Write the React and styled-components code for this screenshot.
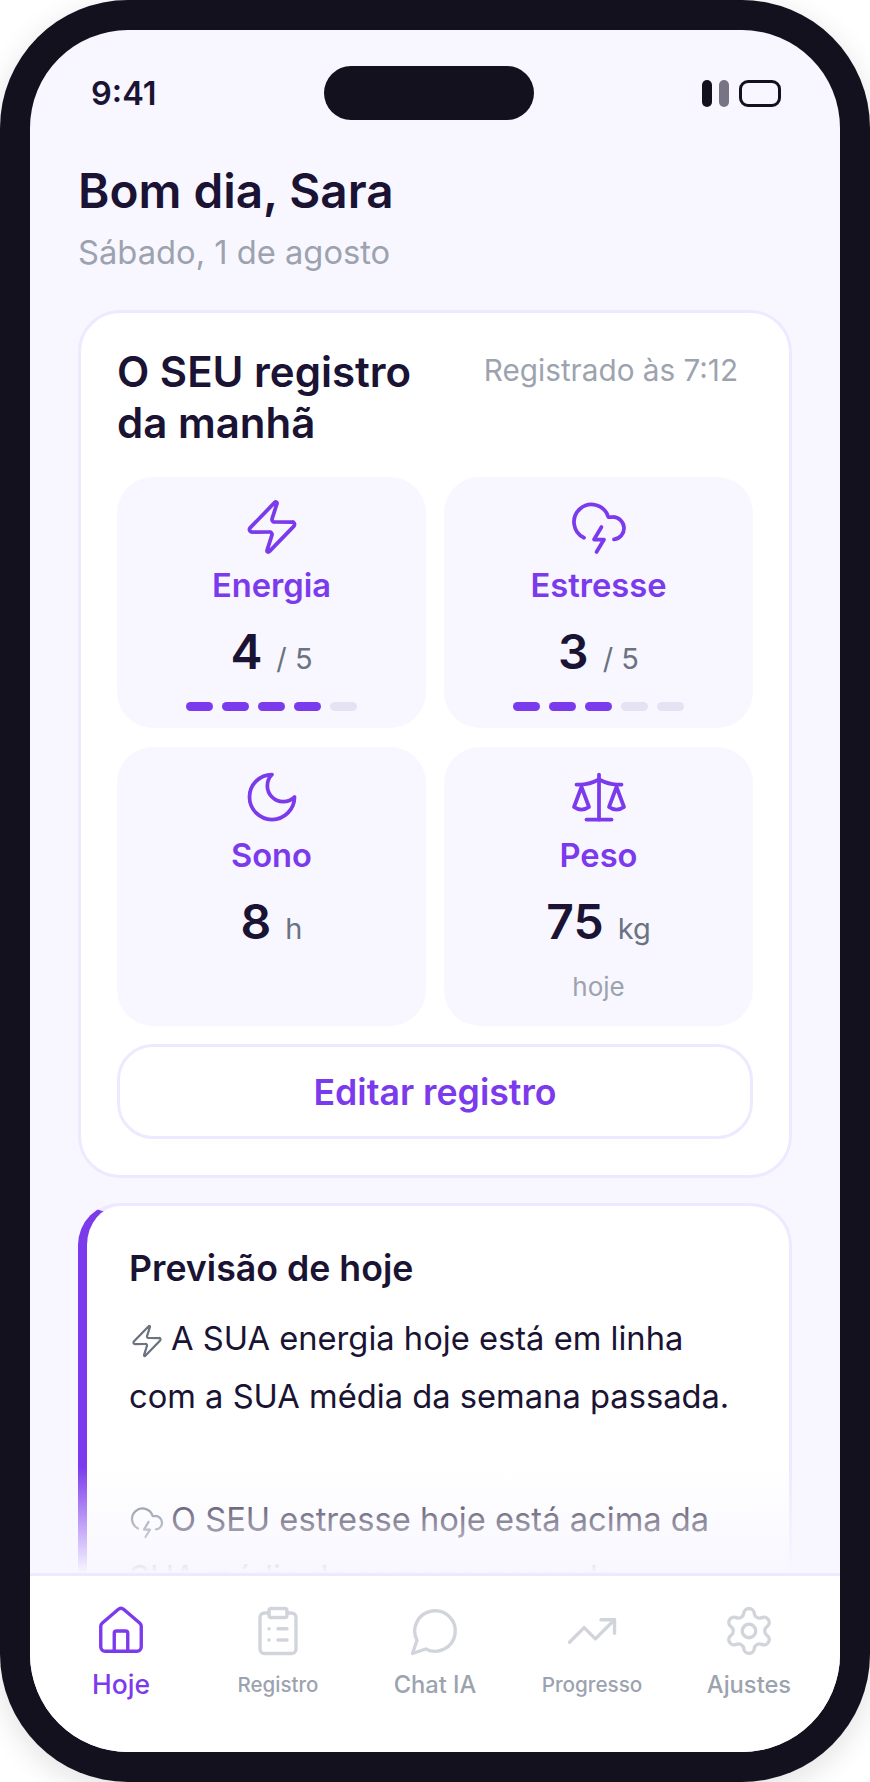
import styled, { createGlobalStyle } from 'styled-components'
import {
    Zap, CloudLightning, House, ClipboardList, TrendingUp, Settings,
} from 'lucide-react'

const GlobalStyle = createGlobalStyle`
    html, body {
        margin: 0;
        padding: 0;
        background: #ffffff;
    }
    * {
        box-sizing: border-box;
    }
`

const Frame = styled.div`
    width: 870px;
    height: 1782px;
    padding: 30px;
    border-radius: 128px;
    background: #14111f;
    box-shadow: 0 8px 30px rgba(20, 17, 31, 0.12);
    font-family: Inter, "Noto Sans", sans-serif;
    color: #1a1333;
`

const Screen = styled.div`
    position: relative;
    display: flex;
    flex-direction: column;
    height: 100%;
    border-radius: 98px;
    overflow: hidden;
    background: #f8f7ff;
`

const Island = styled.div`
    position: absolute;
    top: 36px;
    left: 294px;
    width: 210px;
    height: 54px;
    border-radius: 27px;
    background: #14111f;
`

const StatusBar = styled.div`
    display: flex;
    justify-content: space-between;
    align-items: center;
    flex: none;
    height: 51px;
    margin-top: 38px;
    padding: 0 59px 0 61px;
`

const Clock = styled.span`
    font-size: 32.5px;
    font-weight: 600;
`

const StatusIcons = styled.div`
    display: flex;
    align-items: center;
    gap: 7px;
`

const Bar = styled.span`
    width: 10px;
    height: 27px;
    border-radius: 5px;
    background: ${(props) => (props.$dim ? '#787486' : '#14111f')};
`

const Battery = styled.span`
    width: 42px;
    height: 27px;
    margin-left: 3px;
    border: 3px solid #14111f;
    border-radius: 9px;
`

const Content = styled.div`
    flex: 1;
    min-height: 0;
    overflow: hidden;
    padding: 42px 48px 0;
`

const Greeting = styled.h1`
    margin: 0;
    font-size: 47.7px;
    line-height: 60px;
    font-weight: 600;
`

const DateLine = styled.p`
    margin: 7px 0 0;
    font-size: 32.7px;
    line-height: 48px;
    color: #9ca3af;
`

const Card = styled.section`
    margin-top: 34px;
    padding: 36px 36px 36px;
    border: 3px solid #ede9fe;
    border-radius: 42px;
    background: #ffffff;
`

const CardHeader = styled.div`
    display: flex;
    justify-content: space-between;
    align-items: flex-start;
    margin-bottom: 29px;
`

const CardTitle = styled.h2`
    margin: -3px 0 0;
    width: 320px;
    font-size: 42px;
    line-height: 51px;
    font-weight: 600;
`

const Stamp = styled.span`
    margin-right: 15px;
    font-size: 29.7px;
    line-height: 42px;
    color: #9ca3af;
`

const MetricGrid = styled.div`
    display: grid;
    grid-template-columns: 1fr 1fr;
    grid-template-rows: 251px 279px;
    gap: 19px 18px;
`

const Metric = styled.div`
    display: flex;
    flex-direction: column;
    align-items: center;
    padding-top: 20px;
    border-radius: 36px;
    background: #f8f7ff;
    color: #7c3aed;
`

const MetricLabel = styled.div`
    margin-top: 6px;
    font-size: 32.7px;
    line-height: 44px;
    font-weight: 600;
    color: #7c3aed;
`

const ValueRow = styled.div`
    display: flex;
    align-items: baseline;
    gap: 14px;
    margin-top: 12px;
    line-height: 66px;
`

const Value = styled.span`
    font-size: 48px;
    font-weight: 600;
    color: #1a1333;
`

const Unit = styled.span`
    font-size: 29px;
    color: #6b7280;
`

const Dots = styled.div`
    display: flex;
    gap: 9px;
    margin-top: 10px;
`

const Dot = styled.span`
    width: 27px;
    height: 9px;
    border-radius: 5px;
    background: ${(props) => (props.$on ? '#7c3aed' : '#e5e3f3')};
`

const Note = styled.div`
    margin-top: 7px;
    font-size: 26px;
    line-height: 36px;
    color: #9ca3af;
`

const EditButton = styled.div`
    display: flex;
    align-items: center;
    justify-content: center;
    height: 95px;
    margin-top: 18px;
    border: 3px solid #ede9fe;
    border-radius: 36px;
    background: #ffffff;
    font-size: 35.7px;
    font-weight: 600;
    color: #7c3aed;
`

const ForecastCard = styled.section`
    margin-top: 25px;
    padding: 38px 50px 0 42px;
    border: 3px solid #ede9fe;
    border-left: 9px solid #7c3aed;
    border-radius: 42px;
    background: #ffffff;
`

const ForecastTitle = styled.h3`
    margin: 0 0 17px;
    font-size: 35.7px;
    line-height: 48px;
    font-weight: 600;
`

const ForecastText = styled.p`
    margin: 0 0 65px;
    font-size: 32.7px;
    line-height: 58px;
    color: #1a1333;

    svg {
        margin-right: 6px;
        vertical-align: -9px;
        color: #6b7280;
    }
`

const Fade = styled.div`
    position: absolute;
    left: 0;
    right: 0;
    bottom: 179px;
    height: 106px;
    background: linear-gradient(to bottom, rgba(248, 247, 255, 0), #f8f7ff);
    pointer-events: none;
`

const Nav = styled.nav`
    position: relative;
    display: grid;
    grid-template-columns: repeat(5, 157px);
    justify-content: center;
    flex: none;
    height: 179px;
    padding-top: 28px;
    border-top: 3px solid #ede9fe;
    background: #ffffff;
`

const NavItem = styled.div`
    display: flex;
    flex-direction: column;
    align-items: center;
    color: ${(props) => (props.$active ? '#7c3aed' : '#d1d5db')};
`

const NavLabel = styled.span`
    display: flex;
    align-items: center;
    height: 36px;
    margin-top: 8px;
    font-size: ${(props) => props.$size}px;
    font-weight: 500;
    color: ${(props) => (props.$active ? '#7c3aed' : '#9ca3af')};
`

// older lucide outlines, the package's current ones have different tips
const LineIcon = ({ size, children }) => (
    <svg
        width={size}
        height={size}
        viewBox="0 0 24 24"
        fill="none"
        stroke="currentColor"
        strokeWidth="1.5"
        strokeLinecap="round"
        strokeLinejoin="round"
    >
        {children}
    </svg>
)

const Moon = ({ size }) => (
    <LineIcon size={size}>
        <path d="M12 3a6 6 0 0 0 9 9 9 9 0 1 1-9-9Z" />
    </LineIcon>
)

const Balance = ({ size }) => (
    <LineIcon size={size}>
        <path d="m16 16 3-8 3 8c-.87.65-1.92 1-3 1s-2.13-.35-3-1Z" />
        <path d="m2 16 3-8 3 8c-.87.65-1.92 1-3 1s-2.13-.35-3-1Z" />
        <path d="M7 21h10" />
        <path d="M12 3v18" />
        <path d="M3 7h2c2 0 5-1 7-2 2 1 5 2 7 2h2" />
    </LineIcon>
)

const Bubble = ({ size }) => (
    <LineIcon size={size}>
        <path d="M7.9 20A9 9 0 1 0 4 16.1L2 22Z" />
    </LineIcon>
)

const metricIcon = { size: 60, strokeWidth: 1.5 }
const navIcon = { size: 54, strokeWidth: 1.5 }

const navItems = [
    { label: 'Hoje', icon: House, size: 26.5, active: true },
    { label: 'Registro', icon: ClipboardList, size: 20.5 },
    { label: 'Chat IA', icon: Bubble, size: 23.7 },
    { label: 'Progresso', icon: TrendingUp, size: 20.7 },
    { label: 'Ajustes', icon: Settings, size: 23.7 },
]

const Scale5 = ({ on }) => (
    <Dots>
        {[0, 1, 2, 3, 4].map((i) => <Dot key={i} $on={i < on} />)}
    </Dots>
)

const App = () => {
    return (
        <Frame>
            <GlobalStyle />
            <Screen>
                <Island />
                <StatusBar>
                    <Clock>9:41</Clock>
                    <StatusIcons>
                        <Bar />
                        <Bar $dim />
                        <Battery />
                    </StatusIcons>
                </StatusBar>
                <Content>
                    <Greeting>Bom dia, Sara</Greeting>
                    <DateLine>Sábado, 1 de agosto</DateLine>
                    <Card>
                        <CardHeader>
                            <CardTitle>O SEU registro da manhã</CardTitle>
                            <Stamp>Registrado às 7:12</Stamp>
                        </CardHeader>
                        <MetricGrid>
                            <Metric>
                                <Zap {...metricIcon} />
                                <MetricLabel>Energia</MetricLabel>
                                <ValueRow><Value>4</Value><Unit>/ 5</Unit></ValueRow>
                                <Scale5 on={4} />
                            </Metric>
                            <Metric>
                                <CloudLightning {...metricIcon} />
                                <MetricLabel>Estresse</MetricLabel>
                                <ValueRow><Value>3</Value><Unit>/ 5</Unit></ValueRow>
                                <Scale5 on={3} />
                            </Metric>
                            <Metric>
                                <Moon size={60} />
                                <MetricLabel>Sono</MetricLabel>
                                <ValueRow><Value>8</Value><Unit>h</Unit></ValueRow>
                            </Metric>
                            <Metric>
                                <Balance size={60} />
                                <MetricLabel>Peso</MetricLabel>
                                <ValueRow><Value>75</Value><Unit>kg</Unit></ValueRow>
                                <Note>hoje</Note>
                            </Metric>
                        </MetricGrid>
                        <EditButton>Editar registro</EditButton>
                    </Card>
                    <ForecastCard>
                        <ForecastTitle>Previsão de hoje</ForecastTitle>
                        <ForecastText>
                            <Zap size={36} strokeWidth={1.5} />A SUA energia hoje está em linha com a SUA média da semana passada.
                        </ForecastText>
                        <ForecastText>
                            <CloudLightning size={36} strokeWidth={1.5} />O SEU estresse hoje está acima da SUA média da semana passada.
                        </ForecastText>
                    </ForecastCard>
                </Content>
                <Fade />
                <Nav>
                    {navItems.map(({ label, icon: Icon, size, active }) => (
                        <NavItem key={label} $active={active}>
                            <Icon {...navIcon} />
                            <NavLabel $size={size} $active={active}>{label}</NavLabel>
                        </NavItem>
                    ))}
                </Nav>
            </Screen>
        </Frame>
    )
}

export default App
